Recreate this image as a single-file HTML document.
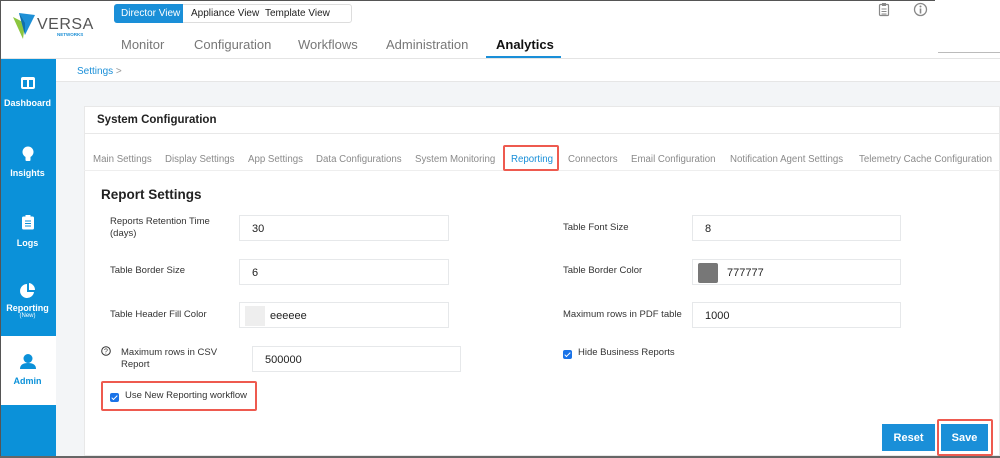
<!DOCTYPE html>
<html><head><meta charset="utf-8"><style>
*{margin:0;padding:0;box-sizing:border-box}
body{width:1000px;height:458px;overflow:hidden;font-family:"Liberation Sans",sans-serif;background:#f3f5f7;position:relative;color:#333}
.a{position:absolute;white-space:nowrap}
.inp{position:absolute;background:#fff;border:1px solid #e6e8ea;height:26px;font-size:11px;color:#222;padding:7px 0 0 12px;white-space:nowrap}
.lbl{position:absolute;font-size:9.5px;color:#333;line-height:12px;white-space:nowrap}
.tab{position:absolute;top:154px;font-size:9.7px;color:#8a8a8a;white-space:nowrap}
.sb{position:absolute;left:0;width:55px;text-align:center;color:#fff;font-size:9px;font-weight:bold}
.cb{position:absolute;width:9px;height:9px;background:#1a73e8;border-radius:2px}
.cb:after{content:"";position:absolute;left:3px;top:1px;width:2px;height:5px;border:solid #fff;border-width:0 1.5px 1.5px 0;transform:rotate(45deg)}
</style></head><body>
<div class="a" style="left:0;top:0;width:1000px;height:59px;background:#fff;border-bottom:1px solid #e4e4e4"></div>
<div class="a" style="left:0;top:0;width:935px;height:1px;background:#555"></div>
<div class="a" style="left:0;top:0;width:1px;height:458px;background:#555"></div>
<div class="a" style="left:0;top:456px;width:1000px;height:2px;background:#666"></div>
<svg class="a" style="left:13px;top:13px" width="24" height="26" viewBox="0 0 24 26"><path d="M0 4 L10 26 L12 10 Z" fill="#8cc63f"/><path d="M6 0 L22 2 L12 22 Z" fill="#1e90d6"/><path d="M6 0 L12 10 L12 22 Z" fill="#0a5a8c" opacity=".6"/></svg>
<div class="a" style="left:37px;top:16px;font-size:16px;color:#555;letter-spacing:.5px">VERSA</div>
<div class="a" style="left:57px;top:32px;font-size:4.5px;color:#1e90d6;font-weight:bold">NETWORKS</div>
<div class="a" style="left:114px;top:4px;width:238px;height:19px;border:1px solid #ddd;border-radius:3px;background:#fff"></div>
<div class="a" style="left:114px;top:4px;width:69px;height:19px;background:#1a8fd8;border-radius:3px 0 0 3px;color:#fff;font-size:10px;padding:4px 0 0 7px">Director View</div>
<div class="a" style="left:191px;top:8px;font-size:10px;color:#222">Appliance View</div>
<div class="a" style="left:265px;top:8px;font-size:10px;color:#222">Template View</div>
<div class="a" style="left:121px;top:37px;font-size:13px;color:#777">Monitor</div>
<div class="a" style="left:194px;top:37px;font-size:13px;color:#777">Configuration</div>
<div class="a" style="left:298px;top:37px;font-size:13px;color:#777">Workflows</div>
<div class="a" style="left:386px;top:37px;font-size:13px;color:#777">Administration</div>
<div class="a" style="left:496px;top:37px;font-size:13px;color:#111;font-weight:bold">Analytics</div>
<div class="a" style="left:486px;top:56px;width:75px;height:2px;background:#1a8fd8"></div>
<div class="a" style="left:938px;top:52px;width:62px;height:1px;background:#bbb"></div>
<svg class="a" style="left:878px;top:2px" width="12" height="15" viewBox="0 0 12 15"><rect x="1.5" y="2.5" width="9" height="11" rx="1" fill="none" stroke="#888" stroke-width="1.2"/><rect x="4" y="1" width="4" height="3" fill="#888"/><path d="M3.5 7h5M3.5 9.5h5M3.5 12h5" stroke="#888"/></svg>
<svg class="a" style="left:913px;top:2px" width="15" height="15" viewBox="0 0 15 15"><circle cx="7.5" cy="7.5" r="6" fill="none" stroke="#888" stroke-width="1.3"/><circle cx="7.5" cy="4.5" r="1" fill="#888"/><path d="M7.5 6.5v5" stroke="#888" stroke-width="1.6"/></svg>
<div class="a" style="left:55px;top:59px;width:945px;height:23px;background:#fff;border-bottom:1px solid #e6e6e6"></div>
<div class="a" style="left:77px;top:66px;font-size:10px;color:#1a8fd8">Settings <span style="color:#999">&gt;</span></div>
<div class="a" style="left:1px;top:59px;width:55px;height:397px;background:#0b91d9"></div>
<div class="a" style="left:1px;top:336px;width:55px;height:69px;background:#fff"></div>
<svg class="a" style="left:21px;top:77px" width="14" height="12" viewBox="0 0 14 12"><rect x="0" y="0" width="14" height="12" rx="2" fill="#fff"/><rect x="2" y="3" width="4" height="7" fill="#0b91d9"/><rect x="8" y="3" width="4" height="7" fill="#0b91d9"/></svg>
<div class="sb" style="top:98px">Dashboard</div>
<svg class="a" style="left:22px;top:146px" width="12" height="16" viewBox="0 0 12 16"><circle cx="6" cy="6" r="5.5" fill="#fff"/><rect x="3.5" y="10" width="5" height="5" rx="1" fill="#fff"/></svg>
<div class="sb" style="top:168px">Insights</div>
<svg class="a" style="left:22px;top:215px" width="12" height="15" viewBox="0 0 12 15"><rect x="0" y="1.5" width="12" height="13" rx="1.5" fill="#fff"/><rect x="3.5" y="0" width="5" height="3" fill="#fff"/><path d="M3 6h6M3 8.5h6M3 11h6" stroke="#0b91d9"/></svg>
<div class="sb" style="top:238px">Logs</div>
<svg class="a" style="left:20px;top:283px" width="16" height="16" viewBox="0 0 16 16"><path d="M7 1 A7 7 0 1 0 14 9 L7 9 Z" fill="#fff"/><path d="M9 0 A7 7 0 0 1 15 7 L9 7 Z" fill="#fff"/></svg>
<div class="sb" style="top:303px">Reporting</div>
<div class="sb" style="top:313px;font-size:6px;font-weight:normal">(New)</div>
<svg class="a" style="left:20px;top:354px" width="16" height="15" viewBox="0 0 16 15"><circle cx="8" cy="4.5" r="4.5" fill="#0b91d9"/><path d="M0 15 Q0 9 8 9 Q16 9 16 15 Z" fill="#0b91d9"/></svg>
<div class="sb" style="top:376px;color:#0b91d9">Admin</div>
<div class="a" style="left:84px;top:106px;width:916px;height:350px;background:#fff;border:1px solid #e8e8e8"></div>
<div class="a" style="left:84px;top:133px;width:916px;height:1px;background:#e8e8e8"></div>
<div class="a" style="left:97px;top:114px;font-size:11.5px;font-weight:bold;color:#222">System Configuration</div>
<div class="a" style="left:84px;top:170px;width:916px;height:1px;background:#eee"></div>
<div class="tab" style="left:93px">Main Settings</div>
<div class="tab" style="left:165px">Display Settings</div>
<div class="tab" style="left:248px">App Settings</div>
<div class="tab" style="left:316px">Data Configurations</div>
<div class="tab" style="left:415px">System Monitoring</div>
<div class="tab" style="left:511px;color:#1a8fd8">Reporting</div>
<div class="tab" style="left:568px">Connectors</div>
<div class="tab" style="left:631px">Email Configuration</div>
<div class="tab" style="left:730px">Notification Agent Settings</div>
<div class="tab" style="left:859px">Telemetry Cache Configuration</div>
<div class="a" style="left:503px;top:145px;width:56px;height:26px;border:2px solid #ee5a4f;border-radius:2px"></div>
<div class="a" style="left:101px;top:187px;font-size:13.5px;font-weight:bold;color:#222">Report Settings</div>
<div class="lbl" style="left:110px;top:216px">Reports Retention Time<br>(days)</div>
<div class="inp" style="left:239px;top:215px;width:210px">30</div>
<div class="lbl" style="left:110px;top:265px">Table Border Size</div>
<div class="inp" style="left:239px;top:259px;width:210px">6</div>
<div class="lbl" style="left:110px;top:309px">Table Header Fill Color</div>
<div class="inp" style="left:239px;top:302px;width:210px;padding-left:30px"><span style="position:absolute;left:5px;top:3px;width:20px;height:20px;background:#eee"></span>eeeeee</div>
<svg class="a" style="left:101px;top:346px" width="10" height="10" viewBox="0 0 10 10"><circle cx="5" cy="5" r="4.3" fill="none" stroke="#333"/><text x="5" y="7.5" font-size="7" text-anchor="middle" fill="#333" font-family="Liberation Sans">?</text></svg>
<div class="lbl" style="left:121px;top:347px">Maximum rows in CSV<br>Report</div>
<div class="inp" style="left:252px;top:346px;width:209px">500000</div>
<div class="cb" style="left:110px;top:393px"></div>
<div class="lbl" style="left:125px;top:390px">Use New Reporting workflow</div>
<div class="a" style="left:101px;top:381px;width:156px;height:30px;border:2px solid #ee5a4f;border-radius:2px"></div>
<div class="lbl" style="left:563px;top:222px">Table Font Size</div>
<div class="inp" style="left:692px;top:215px;width:209px">8</div>
<div class="lbl" style="left:563px;top:265px">Table Border Color</div>
<div class="inp" style="left:692px;top:259px;width:209px;padding-left:34px"><span style="position:absolute;left:5px;top:3px;width:20px;height:20px;background:#777;border-radius:2px"></span>777777</div>
<div class="lbl" style="left:563px;top:309px">Maximum rows in PDF table</div>
<div class="inp" style="left:692px;top:302px;width:209px">1000</div>
<div class="cb" style="left:563px;top:350px"></div>
<div class="lbl" style="left:578px;top:347px">Hide Business Reports</div>
<div class="a" style="left:882px;top:424px;width:53px;height:27px;background:#1a8fd8;color:#fff;font-size:11px;font-weight:bold;text-align:center;line-height:29px">Reset</div>
<div class="a" style="left:941px;top:424px;width:47px;height:27px;background:#1a8fd8;color:#fff;font-size:11px;font-weight:bold;text-align:center;line-height:29px">Save</div>
<div class="a" style="left:937px;top:419px;width:56px;height:37px;border:2px solid #ee5a4f;border-radius:2px"></div>
</body></html>
